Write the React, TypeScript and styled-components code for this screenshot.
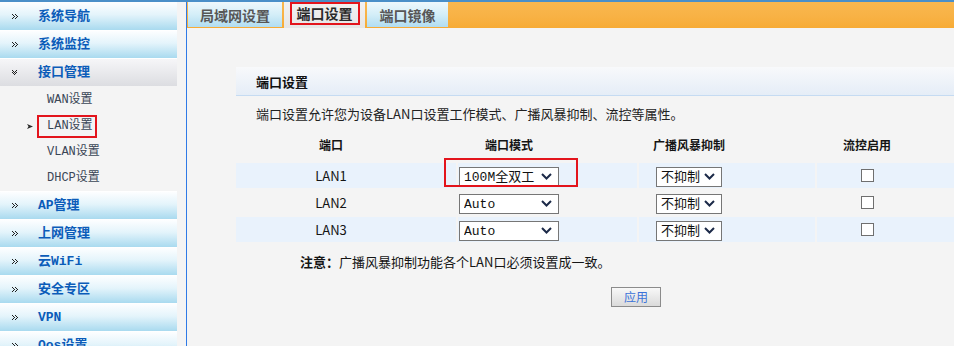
import React from "react";
import styled, { createGlobalStyle } from "styled-components";

const GlobalStyle = createGlobalStyle`
  html, body {
    margin: 0;
    padding: 0;
    background: #f4f4f4;
    overflow: hidden;
  }
  body {
    font-family: "Noto Sans CJK SC", "Noto Sans", sans-serif;
  }
`;

const Page = styled.div`
  width: 954px;
  height: 346px;
  display: flex;
  flex-direction: column;
  overflow: hidden;
  background: #f4f4f4;
`;

const TopBar = styled.div`
  height: 2px;
  flex-shrink: 0;
  background: #4a8fc8;
`;

const Body = styled.div`
  flex: 1;
  display: flex;
  min-height: 0;
`;

const Sidebar = styled.nav`
  width: 177px;
  flex-shrink: 0;
  display: flex;
  flex-direction: column;
`;

const Gutter = styled.div`
  width: 9px;
  flex-shrink: 0;
`;

const Divider = styled.div`
  width: 1px;
  flex-shrink: 0;
  background: #2f7ae6;
`;

const Main = styled.main`
  flex: 1;
  min-width: 0;
  display: flex;
  flex-direction: column;
`;

// sidebar
const MenuItem = styled.div<{ $open?: boolean }>`
  height: 27px;
  flex-shrink: 0;
  border-top: 1px solid #ffffff;
  display: flex;
  align-items: center;
  padding-left: 11px;
  gap: 19px;
  background: ${(p) =>
    p.$open
      ? "linear-gradient(#f6f6f8, #dcdde1)"
      : "linear-gradient(#fdfeff 0%, #e4f4fb 45%, #a9daef 100%)"};
  &:first-child {
    border-top: none;
    height: 28px;
  }
`;

const MenuText = styled.span`
  font-family: "Liberation Mono", "Noto Sans CJK SC", monospace;
  font-size: 13px;
  font-weight: bold;
  color: #0b5cb9;
  line-height: 1;
`;

const SubMenu = styled.div`
  display: flex;
  flex-direction: column;
  padding: 1px 0 0;
  background: #f4f4f4;
`;

const SubItem = styled.div`
  height: 26px;
  display: flex;
  align-items: center;
  padding-left: 27px;
`;

const ArrowSlot = styled.span`
  width: 10px;
  display: flex;
  align-items: center;
`;

const SubLabel = styled.span<{ $marked?: boolean }>`
  font-family: "Liberation Mono", "Noto Sans CJK SC", monospace;
  font-size: 12px;
  color: #3a4656;
  height: 19px;
  line-height: 19px;
  padding: 0 2px 0 8px;
  border: 2px solid ${(p) => (p.$marked ? "#e3141c" : "transparent")};
`;

const closedDots = [
  [0, 0], [3, 0], [1, 1], [4, 1], [2, 2], [5, 2],
  [1, 3], [4, 3], [0, 4], [3, 4],
];
const openDots = [
  [0, 0], [4, 0], [1, 1], [3, 1], [2, 2], [0, 2],
  [4, 2], [1, 3], [3, 3], [2, 4],
];

const Dots = ({ open }: { open?: boolean }) => (
  <svg width="8" height="7" viewBox="0 0 8 7">
    {(open ? openDots : closedDots).map(([x, y], i) => (
      <rect key={i} x={x + 1} y={y + 1} width="1" height="1" fill="#1e1e1e" />
    ))}
  </svg>
);

const SmallArrow = () => (
  <svg width="6" height="5" viewBox="0 0 6 5">
    <path d="M0 0 L6 2.5 L0 5 L1.5 2.5 Z" fill="#2b2b2b" />
  </svg>
);

// tabs
const TabBar = styled.div`
  height: 26px;
  flex-shrink: 0;
  display: flex;
  align-items: flex-start;
  gap: 2px;
  padding-left: 1px;
  background: linear-gradient(#f9b74f 0%, #f8b245 55%, #f7ab35 100%);
`;

const Tab = styled.div<{ $active?: boolean; $w: number }>`
  width: ${(p) => p.$w}px;
  height: ${(p) => (p.$active ? 26 : 25)}px;
  display: flex;
  align-items: center;
  justify-content: center;
  font-size: 14px;
  font-weight: bold;
  color: ${(p) => (p.$active ? "#2a2a2a" : "#575757")};
  background: ${(p) =>
    p.$active
      ? "linear-gradient(#f2f2f2, #e6e6e6)"
      : "linear-gradient(#eef8fc 0%, #d4eef8 50%, #b1ddf1 100%)"};
`;

const Marked = styled.span`
  border: 2px solid #e3141c;
  padding: 0 5px;
  height: 19px;
  line-height: 19px;
  margin-top: -4px;
`;

// content
const Content = styled.div`
  padding: 39px 0 0 49px;
  display: flex;
  flex-direction: column;
`;

const SectionHeader = styled.div`
  height: 28px;
  display: flex;
  align-items: center;
  padding-left: 20px;
  font-size: 13px;
  font-weight: bold;
  color: #111;
  border-bottom: 1px solid #c5dbf2;
  background: linear-gradient(#f8f9fb, #e5edf7);
`;

const Description = styled.p`
  margin: 9px 0 0;
  padding-left: 20px;
  font-size: 13px;
  line-height: 18px;
  color: #222;
`;

const TableGrid = styled.div`
  margin-top: 9px;
  display: flex;
  flex-direction: column;
  gap: 2px;
`;

const Row = styled.div<{ $head?: boolean }>`
  height: ${(p) => (p.$head ? 24 : 25)}px;
  margin-bottom: ${(p) => (p.$head ? 5 : 0)}px;
  display: grid;
  grid-template-columns: 220px 179px 176px 1fr;
  column-gap: 2px;
`;

const Cell = styled.div<{ $shade?: boolean; $shift: number; $head?: boolean }>`
  display: flex;
  align-items: center;
  justify-content: center;
  padding-right: ${(p) => p.$shift}px;
  background: ${(p) => (p.$shade ? "#e9f2fc" : "transparent")};
  font-size: ${(p) => (p.$head ? 12 : 13)}px;
  font-weight: ${(p) => (p.$head ? "bold" : "normal")};
  color: #141414;
`;

const SelectWrap = styled.div<{ $w: number; $marked?: boolean }>`
  position: relative;
  width: ${(p) => p.$w}px;
  height: 20px;
  &::after {
    content: "";
    display: ${(p) => (p.$marked ? "block" : "none")};
    position: absolute;
    left: -15px;
    right: -19px;
    top: -8px;
    bottom: -1px;
    border: 2px solid #e3141c;
    pointer-events: none;
  }
`;

const Select = styled.select`
  appearance: none;
  width: 100%;
  height: 100%;
  box-sizing: border-box;
  border: 1px solid #767676;
  border-radius: 0;
  background: #ffffff;
  padding: 0 0 0 4px;
  font-family: "Liberation Mono", "Noto Sans CJK SC", monospace;
  font-size: 13px;
  color: #111;
  outline: none;
`;

const Chevron = styled.svg`
  position: absolute;
  right: 7px;
  top: 7px;
  pointer-events: none;
`;

const Check = styled.input`
  appearance: none;
  margin: 0;
  width: 13px;
  height: 13px;
  box-sizing: border-box;
  border: 1px solid #6f6f6f;
  background: #fff;
`;

const Note = styled.p`
  margin: 11px 0 0;
  padding-left: 64px;
  font-size: 13px;
  line-height: 18px;
  color: #151515;
  b {
    font-weight: bold;
  }
`;

const ApplyButton = styled.button`
  margin: 16px 0 0 375px;
  width: 50px;
  height: 20px;
  border: 1px solid #8b8b8b;
  border-radius: 0;
  background: linear-gradient(#f8f8f8, #dadada);
  color: #3b72d9;
  font-family: "Noto Sans CJK SC", sans-serif;
  font-size: 12px;
  padding: 0;
  line-height: 18px;
`;

const DropSelect = ({
  w,
  value,
  options,
  marked,
}: {
  w: number;
  value: string;
  options: string[];
  marked?: boolean;
}) => (
  <SelectWrap $w={w} $marked={marked}>
    <Select defaultValue={value}>
      {options.map((o) => (
        <option key={o}>{o}</option>
      ))}
    </Select>
    <Chevron width="11" height="7" viewBox="0 0 11 7">
      <path d="M1 1 L5.5 5.5 L10 1" fill="none" stroke="#1c2a48" strokeWidth="2" />
    </Chevron>
  </SelectWrap>
);

const menuTop = ["系统导航", "系统监控"];
const menuBottom = ["AP管理", "上网管理", "云WiFi", "安全专区", "VPN", "Qos设置"];
const subItems = ["WAN设置", "LAN设置", "VLAN设置", "DHCP设置"];
const modes = ["Auto", "10M半双工", "10M全双工", "100M半双工", "100M全双工"];
const storm = ["不抑制", "1%", "5%", "10%", "20%"];

const ports = [
  { name: "LAN1", mode: "100M全双工" },
  { name: "LAN2", mode: "Auto" },
  { name: "LAN3", mode: "Auto" },
];

export default function App() {
  return (
    <Page>
      <GlobalStyle />
      <TopBar />
      <Body>
        <Sidebar>
          {menuTop.map((m) => (
            <MenuItem key={m}>
              <Dots />
              <MenuText>{m}</MenuText>
            </MenuItem>
          ))}
          <MenuItem $open>
            <Dots open />
            <MenuText>接口管理</MenuText>
          </MenuItem>
          <SubMenu>
            {subItems.map((s) => (
              <SubItem key={s}>
                <ArrowSlot>{s === "LAN设置" && <SmallArrow />}</ArrowSlot>
                <SubLabel $marked={s === "LAN设置"}>{s}</SubLabel>
              </SubItem>
            ))}
          </SubMenu>
          {menuBottom.map((m) => (
            <MenuItem key={m}>
              <Dots />
              <MenuText>{m}</MenuText>
            </MenuItem>
          ))}
        </Sidebar>
        <Gutter />
        <Divider />
        <Main>
          <TabBar>
            <Tab $w={94}>局域网设置</Tab>
            <Tab $w={81} $active>
              <Marked>端口设置</Marked>
            </Tab>
            <Tab $w={81}>端口镜像</Tab>
          </TabBar>
          <Content>
            <SectionHeader>端口设置</SectionHeader>
            <Description>
              端口设置允许您为设备LAN口设置工作模式、广播风暴抑制、流控等属性。
            </Description>
            <TableGrid>
              <Row $head>
                <Cell $head $shift={30}>端口</Cell>
                <Cell $head $shift={77}>端口模式</Cell>
                <Cell $head $shift={76}>广播风暴抑制</Cell>
                <Cell $head $shift={37}>流控启用</Cell>
              </Row>
              {ports.map((p, i) => {
                const shade = i % 2 === 0;
                return (
                  <Row key={p.name}>
                    <Cell $shade={shade} $shift={30}>{p.name}</Cell>
                    <Cell $shade={shade} $shift={77}>
                      <DropSelect w={100} value={p.mode} options={modes} marked={i === 0} />
                    </Cell>
                    <Cell $shade={shade} $shift={76}>
                      <DropSelect w={66} value="不抑制" options={storm} />
                    </Cell>
                    <Cell $shade={shade} $shift={37}>
                      <Check type="checkbox" />
                    </Cell>
                  </Row>
                );
              })}
            </TableGrid>
            <Note>
              <b>注意：</b>广播风暴抑制功能各个LAN口必须设置成一致。
            </Note>
            <div>
              <ApplyButton>应用</ApplyButton>
            </div>
          </Content>
        </Main>
      </Body>
    </Page>
  );
}
